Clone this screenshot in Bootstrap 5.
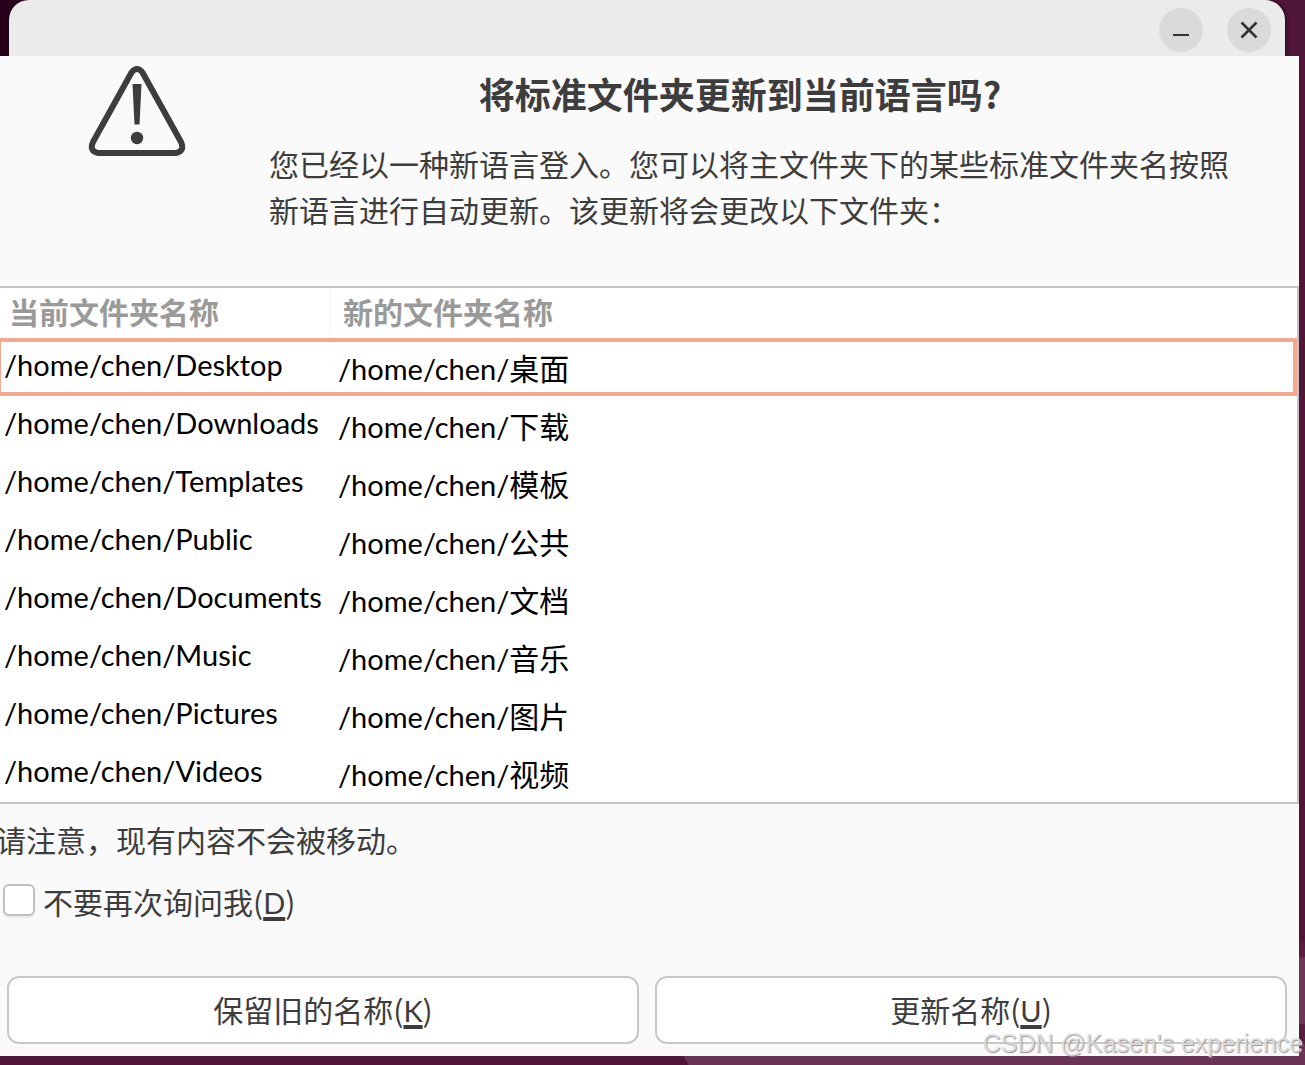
<!DOCTYPE html>
<html lang="zh-CN">
<head>
<meta charset="utf-8">
<meta name="viewport" content="width=device-width, initial-scale=1">
<title>更新标准文件夹</title>
<link rel="stylesheet" href="https://cdn.jsdelivr.net/npm/bootstrap@5.3.0/dist/css/bootstrap.min.css">
<style>
  body {
    min-height: 100vh;
    font-family: Lato, "Noto Sans CJK SC", sans-serif;
    font-size: 30px;
    line-height: 46px;
    color: #3d3d3d;
    background-color: #4f1637;
    background-image:
      linear-gradient(62deg, transparent 7px, #6b3355 8px),
      linear-gradient(#4f1637 0 88%, #5a1d40 89% 957px, #6e3656 957px 1023px, #5a1d40 1025px 1044px, #6b3355 1046px),
      linear-gradient(90deg, #26001a, #2e0420);
    background-repeat: no-repeat;
    background-position: 680px 100%, 100% 0, 0 0;
    background-size: 100% 9px, 20px 100%, 20px 56px;
    overflow-x: hidden;
  }
  .cjk { font-family: "Noto Sans CJK SC", sans-serif; }
  .titlebar {
    height: 56px;
    margin: 0 20px 0 9px;
    padding: 4px 14px 0;
    gap: 24px;
    background: #ebebeb;
    border-radius: 20px 20px 0 0;
    box-shadow: 0 0 5px #14000c;
  }
  .win-btn {
    width: 44px;
    height: 44px;
    background: #dadada;
    color: #333;
  }
  .dialog-body { margin-right: 6px; min-height: 1000px; background: #fafafa; position: relative; }
  .intro { min-height: 230px; padding: 8px 60px 0 88px; gap: 83px; }
  .intro h1 { font-size: 36px; font-weight: 700; line-height: 58px; margin: 0 0 18px; padding-right: 28px; }
  .folder-box { border: 2px solid #c4c4c4; border-left: 0; background: #fff; }
  .folder-grid { width: 100%; border-collapse: separate; border-spacing: 0; }
  .folder-grid th { height: 50px; padding: 0 0 0 9px; color: #9a9a9a; font-weight: 700; line-height: 48px; vertical-align: top; }
  .folder-grid th:first-child { width: 331px; border-right: 2px solid #f8f8f8; }
  .folder-grid th:last-child { padding-left: 12px; }
  .folder-grid td { height: 58px; padding: 0 0 0 7px; color: #000; font-size: 29px; line-height: 46px; vertical-align: top; border: solid transparent; border-width: 4px 0; }
  .folder-grid td:first-child { padding-left: 3px; border-left-width: 1px; }
  .folder-grid td:last-child { padding-top: 3px; border-right-width: 4px; }
  .folder-grid td span { font-size: 30px; }
  .folder-grid .chosen td { border-color: #f4a88f; }
  .remark { margin: 12px 0 0 -4px; }
  .ask { margin: 16px 0 0 3px; gap: 8px; }
  .ask .form-check-input { width: 32px; height: 32px; border: 2px solid #c0c0c0; border-radius: 6px; box-shadow: 0 2px 2px #e8e8e8; margin: 0 0 4px; }
  u { font-family: Lato, sans-serif; font-size: 29px; text-decoration-thickness: 4px; text-underline-offset: 3px; text-decoration-skip-ink: none; }
  .choices { margin-top: 50px; padding: 0 12px 12px 7px; gap: 16px; }
  .choice {
    --bs-btn-font-size: 30px;
    --bs-btn-line-height: 46px;
    --bs-btn-color: #3d3d3d;
    --bs-btn-bg: #fff;
    --bs-btn-border-color: #c8c8c8;
    --bs-btn-border-width: 2px;
    --bs-btn-border-radius: 12px;
    --bs-btn-padding-y: 8px;
    flex: 1 1 0;
    height: 68px;
  }
  .watermark {
    position: absolute;
    right: -4px;
    bottom: -2px;
    font: 25px/30px "Liberation Sans", sans-serif;
    color: rgba(225, 225, 225, .85);
    text-shadow: 1px 1px 1px #999;
    white-space: nowrap;
    pointer-events: none;
  }
</style>
</head>
<body>
<header class="titlebar d-flex justify-content-end align-items-center">
  <button type="button" class="win-btn btn rounded-circle border-0 p-0 d-flex" aria-label="最小化">
    <svg width="44" height="44" viewBox="0 0 44 44"><path d="M14 27h16" stroke="currentColor" stroke-width="2"/></svg>
  </button>
  <button type="button" class="win-btn btn rounded-circle border-0 p-0 d-flex" aria-label="关闭">
    <svg width="44" height="44" viewBox="0 0 44 44"><path d="M14.5 14.5l15 15m0-15l-15 15" stroke="currentColor" stroke-width="2.6"/></svg>
  </button>
</header>
<main class="dialog-body">
  <section class="intro d-flex align-items-start">
    <svg class="flex-shrink-0" width="98" height="94" viewBox="0 0 98 94" aria-hidden="true">
      <path d="M43.5 8.500Q49 1.500 54.500 8.500L93 78Q97 87 88 89H10Q1 87 5 78Z" fill="none" stroke="#3d3d3d" stroke-width="6" stroke-linejoin="round"/>
      <path d="M44.500 20h9l-2 40.500h-5z" fill="#3d3d3d"/>
      <circle cx="49" cy="74" r="6.200" fill="#3d3d3d"/>
    </svg>
    <div class="flex-grow-1 cjk">
      <h1 class="text-center cjk">将标准文件夹更新到当前语言吗?</h1>
      <p class="m-0">您已经以一种新语言登入。您可以将主文件夹下的某些标准文件夹名按照新语言进行自动更新。该更新将会更改以下文件夹：</p>
    </div>
  </section>
  <div class="folder-box">
    <table class="folder-grid">
      <thead><tr><th scope="col">当前文件夹名称</th><th scope="col">新的文件夹名称</th></tr></thead>
      <tbody>
        <tr class="chosen"><td>/home/chen/Desktop</td><td>/home/chen/<span>桌面</span></td></tr>
        <tr><td>/home/chen/Downloads</td><td>/home/chen/<span>下载</span></td></tr>
        <tr><td>/home/chen/Templates</td><td>/home/chen/<span>模板</span></td></tr>
        <tr><td>/home/chen/Public</td><td>/home/chen/<span>公共</span></td></tr>
        <tr><td>/home/chen/Documents</td><td>/home/chen/<span>文档</span></td></tr>
        <tr><td>/home/chen/Music</td><td>/home/chen/<span>音乐</span></td></tr>
        <tr><td>/home/chen/Pictures</td><td>/home/chen/<span>图片</span></td></tr>
        <tr><td>/home/chen/Videos</td><td>/home/chen/<span>视频</span></td></tr>
      </tbody>
    </table>
  </div>
  <p class="remark cjk">请注意，现有内容不会被移动。</p>
  <div class="ask d-flex align-items-center cjk">
    <input class="form-check-input" type="checkbox" id="ask-again">
    <label for="ask-again">不要再次询问我(<u>D</u>)</label>
  </div>
  <div class="choices d-flex">
    <button type="button" class="btn choice cjk">保留旧的名称(<u>K</u>)</button>
    <button type="button" class="btn choice cjk">更新名称(<u>U</u>)</button>
  </div>
  <div class="watermark">CSDN @Kasen's experience</div>
</main>
<script src="https://cdn.jsdelivr.net/npm/bootstrap@5.3.0/dist/js/bootstrap.bundle.min.js"></script>
</body>
</html>
